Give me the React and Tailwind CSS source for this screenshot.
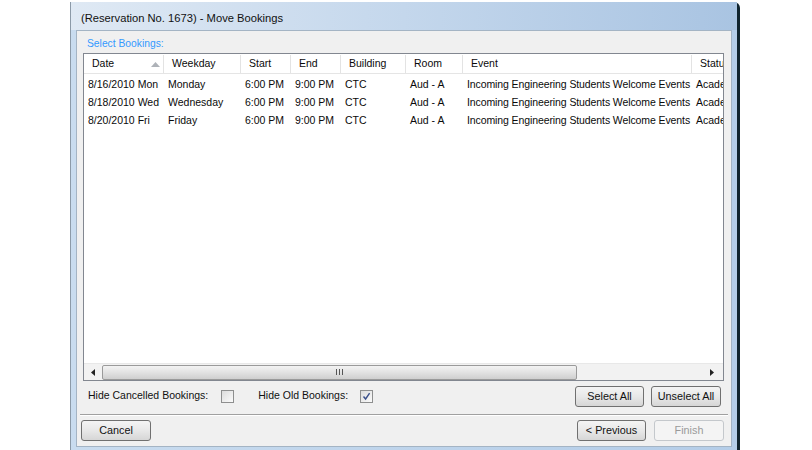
const font = { fontFamily: '"Liberation Sans", Arial, sans-serif' };

const columns = [
  { key: "date", label: "Date", w: 80 },
  { key: "weekday", label: "Weekday", w: 77 },
  { key: "start", label: "Start", w: 50 },
  { key: "end", label: "End", w: 50 },
  { key: "building", label: "Building", w: 65 },
  { key: "room", label: "Room", w: 57 },
  { key: "event", label: "Event", w: 229 },
  { key: "status", label: "Status", w: 90 },
];

const rows = [
  { date: "8/16/2010 Mon", weekday: "Monday", start: "6:00 PM", end: "9:00 PM", building: "CTC", room: "Aud - A", event: "Incoming Engineering Students Welcome Events", status: "Academic" },
  { date: "8/18/2010 Wed", weekday: "Wednesday", start: "6:00 PM", end: "9:00 PM", building: "CTC", room: "Aud - A", event: "Incoming Engineering Students Welcome Events", status: "Academic" },
  { date: "8/20/2010 Fri", weekday: "Friday", start: "6:00 PM", end: "9:00 PM", building: "CTC", room: "Aud - A", event: "Incoming Engineering Students Welcome Events", status: "Academic" },
];

const Button = ({ children, w, disabled }) => (
  <button
    className={`h-[21px] rounded-[3px] border text-[10.8px] leading-none ${
      disabled
        ? "border-[#c4c8cc] bg-[#f4f4f4] text-[#9a9a9a]"
        : "border-[#707070] bg-gradient-to-b from-[#f4f4f4] via-[#e8e8e8] to-[#d6d6d6] text-[#111]"
    }`}
    style={{ width: w }}
  >
    {children}
  </button>
);

const Checkbox = ({ checked }) => (
  <span className="flex h-[13px] w-[13px] items-center justify-center border border-[#8e8f8f] bg-gradient-to-br from-[#dcdcdc] to-[#fbfbfb]">
    {checked && (
      <svg width="9" height="9" viewBox="0 0 9 9">
        <path d="M1.5 4.5 L3.6 7 L7.6 1.2" fill="none" stroke="#3a4f8a" strokeWidth="1.4" />
      </svg>
    )}
  </span>
);

export default function App() {
  return (
    <div className="h-[450px] w-[812px] overflow-hidden bg-white" style={font}>
      <div className="ml-[70px] mt-[2px] flex h-[448px] w-[670px] flex-col rounded-tr-[6px] border-l border-r-[3px] border-l-[#8c9aa8] border-r-[#10242e] bg-gradient-to-r from-[#c9dcef] to-[#b4cde8]">
        {/* Title bar */}
        <div className="flex h-[28px] items-center bg-gradient-to-r from-[#dfe9f4] via-[#c4d7ec] to-[#a9c4e2] pl-[10px] pt-[4px] text-[11.2px] text-[#111]">
          (Reservation No. 1673) - Move Bookings
        </div>

        <div className="mb-[3px] ml-[5px] mr-[5px] flex flex-1 flex-col border border-[#a4b4c4] bg-[#f0f0f0]">
          <div className="ml-[10px] mt-[5px] h-[15px] text-[10.3px] text-[#3399ff]">Select Bookings:</div>

          {/* List view */}
          <div className="ml-[6px] mt-[2px] flex h-[328px] w-[641px] flex-col overflow-hidden border border-[#828790] bg-white text-[10.5px] text-[#0a0a0a]">
            <div className="flex h-[20px] shrink-0 border-b border-[#e5e5e5] pt-[1px]">
              {columns.map((c) => (
                <div
                  key={c.key}
                  className="relative flex shrink-0 items-center border-r border-[#e3e3e3] pl-[8px] pr-[2px]"
                  style={{ width: c.w }}
                >
                  <span className="whitespace-nowrap">{c.label}</span>
                  {c.key === "date" && (
                    <svg className="absolute right-[3px] top-[7px]" width="9" height="5" viewBox="0 0 9 5">
                      <path d="M0 5 L4.5 0 L9 5 Z" fill="#aeb2b8" />
                    </svg>
                  )}
                </div>
              ))}
            </div>
            <div className="mt-[2px] flex-1">
              {rows.map((r, i) => (
                <div key={i} className="flex h-[18px] items-center">
                  {columns.map((c) => (
                    <div
                      key={c.key}
                      className={`shrink-0 overflow-hidden whitespace-nowrap pl-[4px] ${c.key === "event" ? "tracking-[-0.1px]" : ""}`}
                      style={{ width: c.w }}
                    >
                      {r[c.key]}
                    </div>
                  ))}
                </div>
              ))}
            </div>
            {/* Horizontal scrollbar */}
            <div className="flex h-[17px] shrink-0 items-center border-t border-[#e8e8e8] bg-[#f2f2f2] px-[1px]">
              <div className="flex h-[15px] w-[16px] items-center justify-center">
                <svg width="4" height="7" viewBox="0 0 4 7">
                  <path d="M4 0 L0 3.5 L4 7 Z" fill="#222" />
                </svg>
              </div>
              <div className="ml-[1px] flex h-[15px] w-[475px] items-center justify-center rounded-[2px] border border-[#9a9a9a] bg-gradient-to-b from-[#f3f3f3] via-[#e2e2e2] to-[#cfcfcf]">
                <svg width="7" height="6" viewBox="0 0 7 6">
                  <path d="M0.5 0 V6 M3.5 0 V6 M6.5 0 V6" stroke="#555" strokeWidth="1" />
                </svg>
              </div>
              <div className="flex-1" />
              <div className="mr-[2px] flex h-[15px] w-[16px] items-center justify-center">
                <svg width="4" height="7" viewBox="0 0 4 7">
                  <path d="M0 0 L4 3.5 L0 7 Z" fill="#222" />
                </svg>
              </div>
            </div>
          </div>

          {/* Options row */}
          <div className="mt-[4px] flex h-[22px] items-center pl-[11px] pr-[10px] text-[10.5px] text-[#111]">
            <span>Hide Cancelled Bookings:</span>
            <span className="ml-[13px]"><Checkbox /></span>
            <span className="ml-[24px]">Hide Old Bookings:</span>
            <span className="ml-[12px]"><Checkbox checked /></span>
            <div className="flex-1" />
            <div className="flex gap-[7px]">
              <Button w={69}>Select All</Button>
              <Button w={70}>Unselect All</Button>
            </div>
          </div>

          <div className="mx-[3px] mt-[7px] h-[2px] border-t border-b border-t-[#a0a0a0] border-b-white" />

          <div className="mt-[4px] flex items-center pl-[4px] pr-[7px]">
            <Button w={70}>Cancel</Button>
            <div className="flex-1" />
            <div className="flex gap-[8px]">
              <Button w={69}>&lt; Previous</Button>
              <Button w={70} disabled>Finish</Button>
            </div>
          </div>
        </div>
      </div>
    </div>
  );
}
